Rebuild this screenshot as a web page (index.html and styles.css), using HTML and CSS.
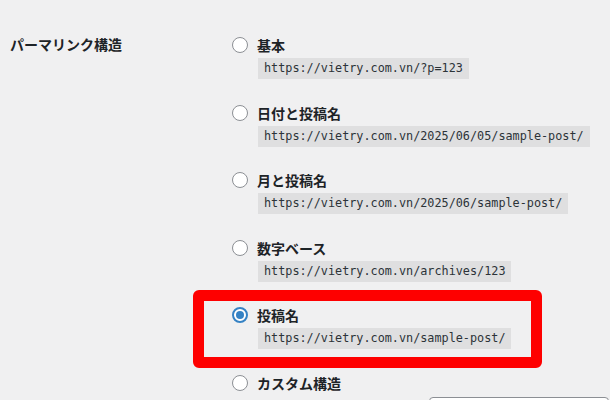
FILE: index.html
```html
<!DOCTYPE html>
<html lang="ja">
<head>
    <meta charset="UTF-8">
    <title>パーマリンク設定</title>
    <link rel="stylesheet" href="styles.css">
</head>
<body>
    <div class="settings">
        <div class="setting-row">
            <div class="setting-title">パーマリンク構造</div>
            <div class="setting-options">
                <div class="option">
                    <label class="option-label"><span class="radio"></span>基本</label>
                    <code>https://vietry.com.vn/?p=123</code>
                </div>
                <div class="option">
                    <label class="option-label"><span class="radio"></span>日付と投稿名</label>
                    <code>https://vietry.com.vn/2025/06/05/sample-post/</code>
                </div>
                <div class="option">
                    <label class="option-label"><span class="radio"></span>月と投稿名</label>
                    <code>https://vietry.com.vn/2025/06/sample-post/</code>
                </div>
                <div class="option">
                    <label class="option-label"><span class="radio"></span>数字ベース</label>
                    <code>https://vietry.com.vn/archives/123</code>
                </div>
                <div class="option">
                    <label class="option-label"><span class="radio checked"></span>投稿名</label>
                    <code>https://vietry.com.vn/sample-post/</code>
                </div>
                <div class="option option-custom">
                    <label class="option-label"><span class="radio"></span>カスタム構造</label>
                    <div class="custom-line">
                        <input type="text" class="custom-input">
                    </div>
                </div>
            </div>
        </div>
        <div class="highlight"></div>
    </div>
</body>
</html>
```

FILE: styles.css
```css
html, body {
    margin: 0;
    padding: 0;
    background-color: #f0f0f1;
    overflow: hidden;
}

body {
    font-family: "Noto Sans CJK JP", "Noto Sans", sans-serif;
    font-size: 14px;
    color: #1d2327;
}

.settings {
    position: relative;
    padding-top: 33px;
    height: 400px;
    box-sizing: border-box;
    overflow: hidden;
}

.setting-row {
    display: flex;
}

.setting-title {
    flex-shrink: 0;
    width: 222px;
    padding-left: 10px;
    font-weight: bold;
    line-height: 22px;
}

.setting-options {
    flex: 1;
    min-width: 0;
}

.option {
    display: flex;
    flex-direction: column;
    align-items: flex-start;
    margin-bottom: 21.5px;
}

.option-label {
    display: flex;
    align-items: center;
    height: 22px;
    margin-top: 1px;
    font-weight: bold;
}

.radio {
    width: 16px;
    height: 16px;
    margin-right: 9px;
    border: 1px solid #8c8f94;
    border-radius: 50%;
    background-color: #fff;
    box-sizing: border-box;
    position: relative;
}

.radio.checked {
    border: 2px solid #3582c4;
}

.radio.checked::after {
    content: "";
    position: absolute;
    left: 2px;
    top: 2px;
    width: 8px;
    height: 8px;
    border-radius: 50%;
    background-color: #3582c4;
}

code {
    display: inline-block;
    margin: 2px 0 0 26px;
    padding: 2px 6px 3px;
    line-height: 16px;
    font-family: "DejaVu Sans Mono", "Liberation Mono", monospace;
    font-size: 11.8px;
    color: #2c3338;
    background-color: rgba(0, 0, 0, 0.07);
}

.custom-line {
    display: flex;
    margin-top: 3px;
    padding-left: 197px;
}

.custom-input {
    width: 180px;
    height: 30px;
    padding: 0 8px;
    border: 1px solid #8c8f94;
    border-radius: 4px;
    background-color: #fff;
    box-sizing: border-box;
}

/* 注目枠 */
.highlight {
    position: absolute;
    left: 193px;
    top: 290px;
    width: 349px;
    height: 78px;
    border: 11px solid #fe0000;
    border-radius: 6px;
    box-sizing: border-box;
}
```
